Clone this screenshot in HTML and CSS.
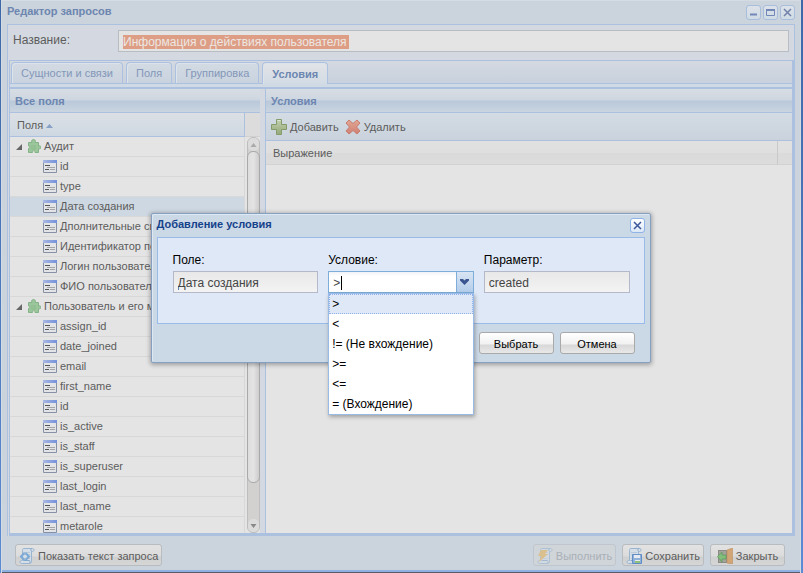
FILE: index.html
```html
<!DOCTYPE html>
<html lang="ru">
<head>
<meta charset="utf-8">
<title>Редактор запросов</title>
<link rel="stylesheet" href="styles.css">
</head>
<body>
<svg class="defs" aria-hidden="true">
  <defs>
    <linearGradient id="blueBar" x1="0" x2="1"><stop offset="0" stop-color="#a9b9e2"/><stop offset="1" stop-color="#7390da"/></linearGradient>
    <linearGradient id="greenFill" x1="0" x2="0" y1="0" y2="1"><stop offset="0" stop-color="#c3d0b0"/><stop offset="1" stop-color="#94a978"/></linearGradient>
    <linearGradient id="redFill" x1="0" x2="0" y1="0" y2="1"><stop offset="0" stop-color="#e2a792"/><stop offset="1" stop-color="#cf7f74"/></linearGradient>
    <symbol id="field" viewBox="0 0 14 13">
      <path d="M.5.5h13v12H.5z" fill="#e2e4e8" stroke="#8791a5"/>
      <path d="M0 0h14v3H0z" fill="url(#blueBar)"/>
      <path d="M2 5.500h5M2 9.500h4" stroke="#555"/>
      <path d="M4 7.500h8M7 9.500h5" stroke="#a4a4a4"/>
    </symbol>
    <symbol id="puzzle" viewBox="0 0 14 14">
      <path d="M1.500 3.500H5C4 1.500 5 .5 6.500.5S9 1.500 8 3.500h3.500V7c2-.7 2.500.3 2.500 1.300s-.8 2-2.500 1.200v4H8c1-2.300-3.500-2.300-2.500 0h-4v-4c1.700.8 1.700-3.200 0-2.500z" fill="#9cc69c" stroke="#85b388"/>
      <path d="M4 6h5v5H4z" fill="#8dbd8e" opacity=".6"/>
    </symbol>
    <symbol id="scroll" viewBox="0 0 16 16">
      <path d="M4.500.5h9c2 0 2 3 0 3h-1v10c0 1-.5 2-2 2h-8c-2 0-2-3 0-3h1v-10c0-1 .3-2 1-2z" fill="#d5dde6" stroke="#98b4d1"/>
      <path d="M4.500 12.500h6c1 1 .5 2.500 0 3M12.500 3.500c-1-1-.5-2.500 0-3" fill="none" stroke="#86a8ca"/>
      <path d="M5 4.500h6M5 6.500h6M5 10.500h6" stroke="#bdcad7"/>
    </symbol>
  </defs>
</svg>

<main class="window">
  <header class="titlebar">
    <h1 class="title">Редактор запросов</h1>
    <div class="tools">
      <button class="tool" aria-label="Свернуть"><svg viewBox="0 0 15 15"><path d="M4 9.500h7" stroke="#7287b8" stroke-width="2"/></svg></button>
      <button class="tool" aria-label="Развернуть"><svg viewBox="0 0 15 15"><path d="M3.500 4.500h8v6h-8z" fill="none" stroke="#7287b8"/><path d="M3 5h9" stroke="#7287b8" stroke-width="2"/></svg></button>
      <button class="tool" aria-label="Закрыть окно"><svg viewBox="0 0 15 15"><path d="M4 4l7 7M11 4l-7 7" stroke="#7181aa" stroke-width="1.500"/></svg></button>
    </div>
  </header>

  <div class="body">
    <div class="name-row">
      <label class="name-label" for="name">Название:</label>
      <input class="name-input" id="name" type="text" value="Информация о действиях пользователя">
    </div>
    <div class="tab-panel">
      <nav class="tabs" role="tablist">
        <button class="tab" role="tab">Сущности и связи</button>
        <button class="tab" role="tab">Поля</button>
        <button class="tab" role="tab">Группировка</button>
        <button class="tab active" role="tab" aria-selected="true">Условия</button>
      </nav>
      <div class="columns">
        <section class="panel fields">
          <h2 class="panel-title">Все поля</h2>
          <div class="tree">
            <div class="tree-clip">
              <table class="tree-table">
                <thead><tr><th>Поля <svg class="sort" viewBox="0 0 7 4"><path d="M0 4L3.500 0 7 4z" fill="#86a0c6"/></svg></th></tr></thead>
                <tbody>
                  <tr class="group"><td><svg class="arrow" viewBox="0 0 6 6"><path d="M6 0v6H0z" fill="#666"/></svg><svg class="puzzle"><use href="#puzzle"/></svg>Аудит</td></tr>
                  <tr><td><svg class="field"><use href="#field"/></svg>id</td></tr>
                  <tr><td><svg class="field"><use href="#field"/></svg>type</td></tr>
                  <tr class="selected"><td><svg class="field"><use href="#field"/></svg>Дата создания</td></tr>
                  <tr><td><svg class="field"><use href="#field"/></svg>Дполнительные сведения</td></tr>
                  <tr><td><svg class="field"><use href="#field"/></svg>Идентификатор пользователя</td></tr>
                  <tr><td><svg class="field"><use href="#field"/></svg>Логин пользователя</td></tr>
                  <tr><td><svg class="field"><use href="#field"/></svg>ФИО пользователя</td></tr>
                  <tr class="group"><td><svg class="arrow" viewBox="0 0 6 6"><path d="M6 0v6H0z" fill="#666"/></svg><svg class="puzzle"><use href="#puzzle"/></svg>Пользователь и его метароль</td></tr>
                  <tr><td><svg class="field"><use href="#field"/></svg>assign_id</td></tr>
                  <tr><td><svg class="field"><use href="#field"/></svg>date_joined</td></tr>
                  <tr><td><svg class="field"><use href="#field"/></svg>email</td></tr>
                  <tr><td><svg class="field"><use href="#field"/></svg>first_name</td></tr>
                  <tr><td><svg class="field"><use href="#field"/></svg>id</td></tr>
                  <tr><td><svg class="field"><use href="#field"/></svg>is_active</td></tr>
                  <tr><td><svg class="field"><use href="#field"/></svg>is_staff</td></tr>
                  <tr><td><svg class="field"><use href="#field"/></svg>is_superuser</td></tr>
                  <tr><td><svg class="field"><use href="#field"/></svg>last_login</td></tr>
                  <tr><td><svg class="field"><use href="#field"/></svg>last_name</td></tr>
                  <tr><td><svg class="field"><use href="#field"/></svg>metarole</td></tr>
                </tbody>
              </table>
            </div>
            <div class="tree-side">
              <div class="side-head"></div>
              <div class="scrollbar">
                <svg class="scroll-arrow" viewBox="0 0 11 13"><path d="M2.500 9l3-4 3 4z" fill="#aaa"/></svg>
                <div class="thumb"></div>
                <div class="track-rest"></div>
                <svg class="scroll-arrow" viewBox="0 0 11 13"><path d="M2.500 5l3 4 3-4z" fill="#888"/></svg>
              </div>
            </div>
          </div>
        </section>
        <section class="panel conditions">
          <h2 class="panel-title">Условия</h2>
          <div class="toolbar">
            <button class="tb-btn"><svg viewBox="0 0 16 16"><path d="M5.500.5h5v5h5v5h-5v5h-5v-5h-5v-5h5z" fill="url(#greenFill)" stroke="#849c6b" stroke-linejoin="round"/><path d="M6.500 1.500h3" stroke="#dce5d0"/></svg>Добавить</button>
            <button class="tb-btn"><svg viewBox="0 0 16 16"><path d="M4 1l4 3.500L12 1l3 3-3.500 4 3.500 4-3 3-4-3.500L4 15l-3-3 3.500-4L1 4z" fill="url(#redFill)" stroke="#c87c6e" stroke-linejoin="round"/></svg>Удалить</button>
          </div>
          <table class="cond-table"><thead><tr><th>Выражение</th><th class="spare"></th></tr></thead></table>
        </section>
      </div>
    </div>
  </div>

  <footer class="footer">
    <button class="btn dim"><svg viewBox="0 0 16 16"><use href="#scroll"/><path d="M5 4L.5 8.500 5 13l1.500-1.500-3-3 3-3zM7 4l4.500 4.500L7 13l-1.500-1.500 3-3-3-3z" fill="#7daad5"/></svg>Показать текст запроса</button>
    <span class="push"></span>
    <button class="btn dim disabled" disabled><svg viewBox="0 0 16 16"><use href="#scroll"/><path d="M4 2h7L8 6h3l-9 8 2-6H1z" fill="#e2b35c"/></svg>Выполнить</button>
    <button class="btn dim"><svg viewBox="0 0 16 16"><use href="#scroll"/><path d="M6.500 6.500h9v9h-9z" fill="#8fb0d8" stroke="#5f8cc4"/><path d="M8 7h6v3H8z" fill="#e6ebf2"/><path d="M9 12h5v3H9z" fill="#e6ebf2"/><path d="M9 13h5v2H9z" fill="#91c279"/></svg>Сохранить</button>
    <button class="btn dim"><svg viewBox="0 0 16 16"><path d="M1 2h9v13H1z" fill="#8c8c86"/><path d="M2 3h7v11H2z" fill="#a2a49c"/><path d="M10 2l5.500-2v16L10 15z" fill="#d2a577" stroke="#bc8e62" stroke-width=".6"/><path d="M.5 8.500L5 4v3h4v4H5v3z" fill="#82bd7c" stroke="#5d985a" stroke-width=".7"/></svg>Закрыть</button>
  </footer>
</main>

<section class="dialog" role="dialog" aria-labelledby="dlg-title">
  <header class="dlg-head">
    <h2 class="dlg-title" id="dlg-title">Добавление условия</h2>
    <button class="tool bright" aria-label="Закрыть"><svg viewBox="0 0 15 15"><path d="M4 4l7 7M11 4l-7 7" stroke="#3c569b" stroke-width="1.500"/></svg></button>
  </header>
  <div class="dlg-form">
    <div class="cell">
      <label for="f-field">Поле:</label>
      <input class="text" id="f-field" type="text" value="Дата создания" readonly>
    </div>
    <div class="cell">
      <label for="f-cond">Условие:</label>
      <div class="combo">
        <input class="combo-input" id="f-cond" type="text" value="&gt;" role="combobox" aria-expanded="true" aria-controls="cond-list">
        <button class="trigger" aria-label="Открыть список"><svg viewBox="0 0 9 6"><path d="M0 0h3l1.500 1.500L6 0h3v1.500L4.500 6 0 1.500z" fill="#3a558f"/></svg></button>
        <ul class="list" id="cond-list" role="listbox">
          <li class="current" role="option" aria-selected="true">&gt;</li>
          <li role="option">&lt;</li>
          <li role="option">!= (Не вхождение)</li>
          <li role="option">&gt;=</li>
          <li role="option">&lt;=</li>
          <li role="option">= (Вхождение)</li>
        </ul>
      </div>
    </div>
    <div class="cell">
      <label for="f-param">Параметр:</label>
      <input class="text" id="f-param" type="text" value="created" readonly>
    </div>
  </div>
  <div class="dlg-buttons">
    <button class="btn">Выбрать</button>
    <button class="btn">Отмена</button>
  </div>
</section>
</body>
</html>
```
FILE: styles.css
```css
* { box-sizing: border-box; }
html, body { height: 100%; }
body {
  margin: 0;
  overflow: hidden;
  background: linear-gradient(#3d68a8, #5b8bd3);
  font: 11px/14px "Liberation Sans", Arial, sans-serif;
  color: #5c5c5c;
}
button, input { font: inherit; color: inherit; margin: 0; }
h1, h2, ul { margin: 0; padding: 0; }
svg { display: block; flex: none; }
.defs { position: absolute; width: 0; height: 0; }

.window {
  height: 100vh;
  margin: 0 2px 0 1px;
  padding: 0 5px;
  display: flex;
  flex-direction: column;
  background: #cbd3dc;
  border: solid #d5dbe3;
  border-width: 1px 1px 0 1px;
  box-shadow: inset 0 -1px #555c66, inset 0 -3px #8fb0e0;
}
.titlebar { height: 23px; display: flex; align-items: flex-start; justify-content: space-between; padding-top: 4px; }
.title { font-size: 11px; line-height: 13px; color: #6c86b0; }
.tools { display: flex; gap: 2px; }
.tool {
  width: 15px; height: 15px; padding: 0;
  border: 1px solid #a9bedd; border-radius: 3px;
  background: linear-gradient(#dde2e8, #cfdbe5);
}
.tool svg { width: 15px; height: 15px; margin: -1px; }
.tool.bright { border-color: #8fb3e8; background: linear-gradient(#fff, #dbe8f6); }

.body {
  flex: 1; min-height: 0;
  display: flex; flex-direction: column;
  border: 1px solid #acc1df; border-bottom: 0;
  background: #d4d9e1;
}
.name-row { height: 35px; display: flex; padding: 5px 5px 0; }
.name-label { width: 105px; padding-top: 3px; font-size: 12px; }
.name-input {
  flex: 1; min-width: 0; height: 22px; padding: 1px 4px 0;
  border: 1px solid #b8bcc3; outline: 0;
  color: #ece7e3; font-size: 12px;
  background: linear-gradient(#de9e85, #de9e85) 4px 4px / 226px 14px no-repeat, #e4e4e4;
}
.tab-panel {
  flex: 1; min-height: 0;
  display: flex; flex-direction: column;
  margin-left: 1px;
  border: solid #acc1df; border-width: 1px 2px 3px 1px;
}
.tabs {
  height: 26px; display: flex; gap: 3px; padding: 1px 1px 0;
  background: linear-gradient(#d4d9e1, #c8d1dd) 0 0 / 100% 22px no-repeat, linear-gradient(#acc1df, #acc1df) 0 22px / 100% 1px no-repeat, #d0dae5;
}
.tab {
  height: 21px; padding: 0 9px;
  border: 1px solid #acc1df; border-bottom: 0; border-radius: 4px 4px 0 0;
  background: linear-gradient(#d3dae3, #c9d3df);
  box-shadow: inset 1px 1px #dde3ea;
  color: #8397b9;
}
.tab.active { height: 22px; background: linear-gradient(#e2e4e7, #d2dbe5); color: #6c86b0; font-weight: bold; }
.columns { flex: 1; min-height: 0; display: flex; gap: 5px; border-top: 2px solid #acc1df; background: #d4d9e1; }
.panel { display: flex; flex-direction: column; min-height: 0; background: #e4e4e4; }
.fields { width: 250px; }
.conditions { flex: 1; min-width: 0; border-left: 1px solid #acc1df; }
.panel-title {
  height: 24px; padding: 5px 5px 0; font-size: 11px; color: #6c86b0;
  border-bottom: 1px solid #acc1df;
  background: linear-gradient(#d8dde4 0, #cdd6e0 11px, #bac9dc 12px, #bccadb 14px, #cad5e0);
}
.tree { flex: 1; min-height: 0; display: flex; }
.tree-clip { flex: 1; min-width: 0; overflow: hidden; }
.tree-table { width: 100%; table-layout: fixed; border-collapse: separate; border-spacing: 0; }
.tree-table th, .side-head, .cond-table th { height: 24px; padding: 0; font-weight: normal; text-align: left; }
.tree-table th { padding-left: 7px; border-bottom: 1px solid #acc1df; border-right: 1px solid #acc1df; background: linear-gradient(#dce0e5, #ced8e2); }
.sort { display: inline-block; width: 7px; height: 4px; vertical-align: 1px; }
.tree-table td { height: 20px; padding: 0 0 0 33px; line-height: 19px; border-bottom: 1px solid #d8d8d8; border-right: 1px solid #d8d8d8; white-space: nowrap; overflow: hidden; }
.tree-table td svg { display: inline-block; vertical-align: -3px; margin-right: 3px; }
.tree-table .group td { padding-left: 6px; }
.tree-table .selected td { background: #ced8e2; }
.tree-table td .arrow { width: 6px; height: 6px; margin-right: 5px; vertical-align: 0; }
.field { width: 14px; height: 13px; }
.puzzle { width: 14px; height: 14px; }
.tree-side { width: 15px; display: flex; flex-direction: column; }
.side-head { background: #dcdcdc; border-bottom: 1px solid #d0d0d0; }
.scrollbar {
  flex: 1; width: 13px; margin-left: 2px;
  display: flex; flex-direction: column;
  border: 1px solid #bdbdbd; border-radius: 6px; background: #d3d1cf;
}
.scroll-arrow { width: 11px; height: 13px; border-radius: 5px; background: #dcdcdc; }
.thumb { flex: 333; margin: 0 -1px; border: 1px solid #a9a9a9; border-radius: 6px; background: linear-gradient(90deg, #dedede, #e3e3e3 50%, #cdcdcd); }
.track-rest { flex: 36; }

.toolbar { height: 28px; display: flex; gap: 6px; padding: 1px 5px 0; border-bottom: 1px solid #acc1df; background: linear-gradient(#d3dbe3, #cad3dd); }
.tb-btn { display: flex; align-items: center; gap: 3px; padding: 0; border: 0; background: none; }
.tb-btn svg { width: 16px; height: 16px; }
.cond-table { width: 100%; border-collapse: separate; border-spacing: 0; }
.cond-table th { padding-left: 7px; background: linear-gradient(#e1e1e1, #dfdfdf 50%, #dadada 51%, #dcdcdc); border-bottom: 1px solid #d2d2d2; }
.cond-table .spare { width: 15px; border-left: 1px solid #c9c9c9; }

.footer { height: 37px; display: flex; gap: 6px; padding: 8px 10px 0 8px; }
.push { flex: 1; }
.btn {
  height: 22px; min-width: 75px; padding: 1px 3px 0;
  border: 1px solid #a9a9a9; border-radius: 3px;
  background: linear-gradient(#fff, #f1f1f1 11px, #d8d8d8 12px, #e8e8e8);
  color: #000; font-size: 11px;
}
.btn.dim {
  display: flex; align-items: center; justify-content: center; gap: 3px;
  border-color: #b9bcbf; color: #5c5c5c;
  background: linear-gradient(#e2e2e2, #dcdcdc 11px, #cfd0d1 12px, #d6d6d6);
}
.btn.dim.disabled { color: #a9afb6; border-color: #c0c6cd; background: #d0d5da; }
.btn.disabled svg { opacity: .6; }
.btn svg { width: 16px; height: 16px; }

.dialog {
  position: absolute; left: 50%; top: 213px; width: 500px; margin-left: -251px;
  padding: 0 5px 8px;
  border: 1px solid #86a0c2; border-radius: 2px;
  background: #cbd8e6;
  box-shadow: inset 1px 1px #dee8f3, 0 1px 4px 1px rgba(0, 0, 0, .3);
  color: #000; font-size: 12px;
}
.dlg-head { height: 23px; display: flex; align-items: flex-start; justify-content: space-between; padding-top: 4px; }
.dlg-title { font-size: 11px; line-height: 13px; color: #15428b; }
.dlg-form { height: 87px; display: flex; gap: 10px; padding: 15px 14px 15px 15px; border: 1px solid #99bbe8; background: #dfe8f6; }
.cell { flex: 1; min-width: 0; }
.cell label { display: block; height: 18px; }
.text, .combo-input { display: block; width: 100%; height: 22px; padding: 1px 4px 0; border: 1px solid #b5b8c8; outline: 0; }
.text { background: linear-gradient(#e8e8e8, #f3f3f3); color: #444; }
.combo { position: relative; display: flex; }
.combo-input { flex: 1; min-width: 0; border-color: #7eadd9; background: linear-gradient(#000, #000) 12px 4px / 1px 14px no-repeat, linear-gradient(#f0f2f5, #fff 4px); color: #444; }
.trigger { width: 17px; height: 22px; padding: 0; border: 1px solid #7eadd9; border-left: 0; background: linear-gradient(#d8e5f4, #b4cdea); }
.trigger svg { width: 9px; height: 6px; margin: 0 auto; }
.list { position: absolute; z-index: 2; left: 0; right: 0; top: 22px; list-style: none; border: 1px solid #99bbe8; background: #fff; box-shadow: 1px 2px 4px rgba(0, 0, 0, .3); }
.list li { height: 20px; padding: 3px; }
.list .current { padding: 2px; border: 1px dotted #8fb0e8; background: #dfe8f6; }
.dlg-buttons { display: flex; justify-content: flex-end; gap: 6px; padding: 8px 10px 0; }
```
